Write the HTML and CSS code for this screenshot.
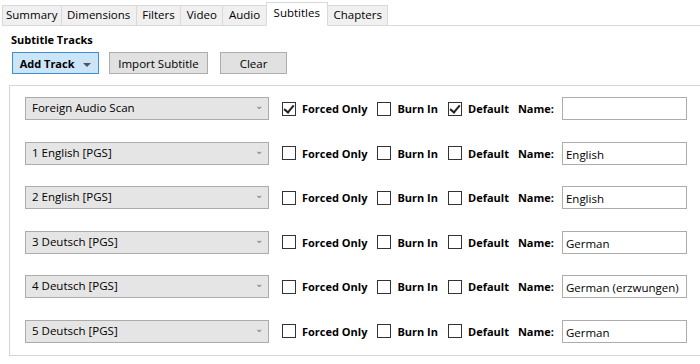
FILE: index.html
```html
<!DOCTYPE html>
<html lang="en">
<head>
    <meta charset="UTF-8">
    <title>Subtitles</title>
    <link rel="stylesheet" href="styles.css">
</head>
<body>
    <div class="tabs">
        <div class="tab">Summary</div>
        <div class="tab">Dimensions</div>
        <div class="tab">Filters</div>
        <div class="tab">Video</div>
        <div class="tab">Audio</div>
        <div class="tab active">Subtitles</div>
        <div class="tab">Chapters</div>
        <div class="tab-fill"></div>
    </div>

    <div class="page">
        <h2 class="title">Subtitle Tracks</h2>
        <div class="toolbar">
            <button class="btn btn-primary">Add Track <span class="caret"></span></button>
            <button class="btn btn-import">Import Subtitle</button>
            <button class="btn btn-clear">Clear</button>
        </div>

        <div class="group">
            <div class="track">
                <div class="combo">Foreign Audio Scan<span class="chev">&#x2304;</span></div>
                <label class="check"><span class="box checked"></span>Forced Only</label>
                <label class="check"><span class="box"></span>Burn In</label>
                <label class="check"><span class="box checked"></span>Default</label>
                <span class="name-label">Name:</span>
                <div class="field"></div>
            </div>
            <div class="track">
                <div class="combo">1 English [PGS]<span class="chev">&#x2304;</span></div>
                <label class="check"><span class="box"></span>Forced Only</label>
                <label class="check"><span class="box"></span>Burn In</label>
                <label class="check"><span class="box"></span>Default</label>
                <span class="name-label">Name:</span>
                <div class="field">English</div>
            </div>
            <div class="track">
                <div class="combo">2 English [PGS]<span class="chev">&#x2304;</span></div>
                <label class="check"><span class="box"></span>Forced Only</label>
                <label class="check"><span class="box"></span>Burn In</label>
                <label class="check"><span class="box"></span>Default</label>
                <span class="name-label">Name:</span>
                <div class="field">English</div>
            </div>
            <div class="track">
                <div class="combo">3 Deutsch [PGS]<span class="chev">&#x2304;</span></div>
                <label class="check"><span class="box"></span>Forced Only</label>
                <label class="check"><span class="box"></span>Burn In</label>
                <label class="check"><span class="box"></span>Default</label>
                <span class="name-label">Name:</span>
                <div class="field">German</div>
            </div>
            <div class="track">
                <div class="combo">4 Deutsch [PGS]<span class="chev">&#x2304;</span></div>
                <label class="check"><span class="box"></span>Forced Only</label>
                <label class="check"><span class="box"></span>Burn In</label>
                <label class="check"><span class="box"></span>Default</label>
                <span class="name-label">Name:</span>
                <div class="field">German (erzwungen)</div>
            </div>
            <div class="track">
                <div class="combo">5 Deutsch [PGS]<span class="chev">&#x2304;</span></div>
                <label class="check"><span class="box"></span>Forced Only</label>
                <label class="check"><span class="box"></span>Burn In</label>
                <label class="check"><span class="box"></span>Default</label>
                <span class="name-label">Name:</span>
                <div class="field">German</div>
            </div>
        </div>
    </div>
</body>
</html>
```

FILE: styles.css
```css
body {
    margin: 0;
    padding: 0;
    background-color: #fff;
    font-family: "Open Sans", "Noto Sans", Arial, sans-serif;
    font-size: 11.5px;
    color: #000;
    overflow: hidden;
}

/* tab strip */
.tabs {
    display: flex;
    align-items: flex-end;
    height: 26px;
    padding-left: 2px;
}

.tab {
    height: 19px;
    line-height: 18px;
    padding: 0 5.5px;
    background-color: #f0f0f0;
    border: 1px solid #d9d9d9;
    border-right: none;
    border-bottom: 1px solid #d9d9d9;
    font-size: 11.5px;
}

.tab:first-child {
    padding: 0 3px;
}

.tab.active {
    height: 22px;
    line-height: 20px;
    padding: 0 7px;
    background-color: #fff;
    border-right: 1px solid #d9d9d9;
    border-bottom: 1px solid #fff;
}

.tab.active + .tab {
    border-left: none;
}

.tab:nth-child(7) {
    border-right: 1px solid #d9d9d9;
}

.tab-fill {
    flex: 1;
    border-bottom: 1px solid #d9d9d9;
}

/* page */
.page {
    padding: 6px 0 0 9px;
}

.title {
    margin: 0 0 0 2px;
    font-size: 11px;
    font-weight: bold;
    line-height: 16px;
}

.toolbar {
    display: flex;
    gap: 10px;
    margin: 4px 0 0 3px;
}

.btn {
    height: 22px;
    padding: 0;
    font-family: inherit;
    font-size: 11.5px;
    background-color: #e1e1e1;
    border: 1px solid #adadad;
    color: #000;
}

.btn-primary {
    width: 87px;
    font-size: 11px;
    font-weight: bold;
    background-color: #cce4f7;
    border-color: #3d8fd6;
}

.caret {
    display: inline-block;
    width: 0;
    height: 0;
    margin-left: 6px;
    border-left: 4px solid transparent;
    border-right: 4px solid transparent;
    border-top: 4px solid #555;
    vertical-align: middle;
}

.btn-import {
    width: 99px;
}

.btn-clear {
    width: 67px;
    margin-left: 2px;
}

/* tracks */
.group {
    margin-top: 11px;
    border: 1px solid #d5d5d5;
    border-right: none;
    height: 271px;
    padding: 11px 0 0 15px;
    box-sizing: border-box;
}

.track {
    display: flex;
    align-items: center;
    height: 23px;
    margin-bottom: 21.5px;
}

.combo {
    position: relative;
    height: 21px;
    line-height: 20px;
    padding-left: 6px;
    width: 236px;
    background-color: #e5e5e5;
    border: 1px solid #acacac;
}

.chev {
    position: absolute;
    right: 5px;
    top: -3px;
    font-size: 10px;
    color: #777;
}

.check {
    display: flex;
    align-items: center;
    font-size: 11px;
    font-weight: bold;
    margin-left: 13px;
}

.check + .check {
    margin-left: 10px;
}

.box {
    position: relative;
    width: 12px;
    height: 12px;
    border: 1px solid #333;
    background-color: #fff;
    margin-right: 6px;
}

.box.checked::after {
    content: "";
    position: absolute;
    left: 3px;
    top: 0;
    width: 4px;
    height: 8px;
    border-right: 2px solid #222;
    border-bottom: 2px solid #222;
    transform: rotate(40deg);
}

.name-label {
    font-size: 11px;
    font-weight: bold;
    margin-left: 9px;
}

.field {
    width: 120px;
    height: 21px;
    line-height: 24px;
    margin-left: 8px;
    padding-left: 3px;
    border: 1px solid #acacac;
    background-color: #fff;
    white-space: nowrap;
}
```
